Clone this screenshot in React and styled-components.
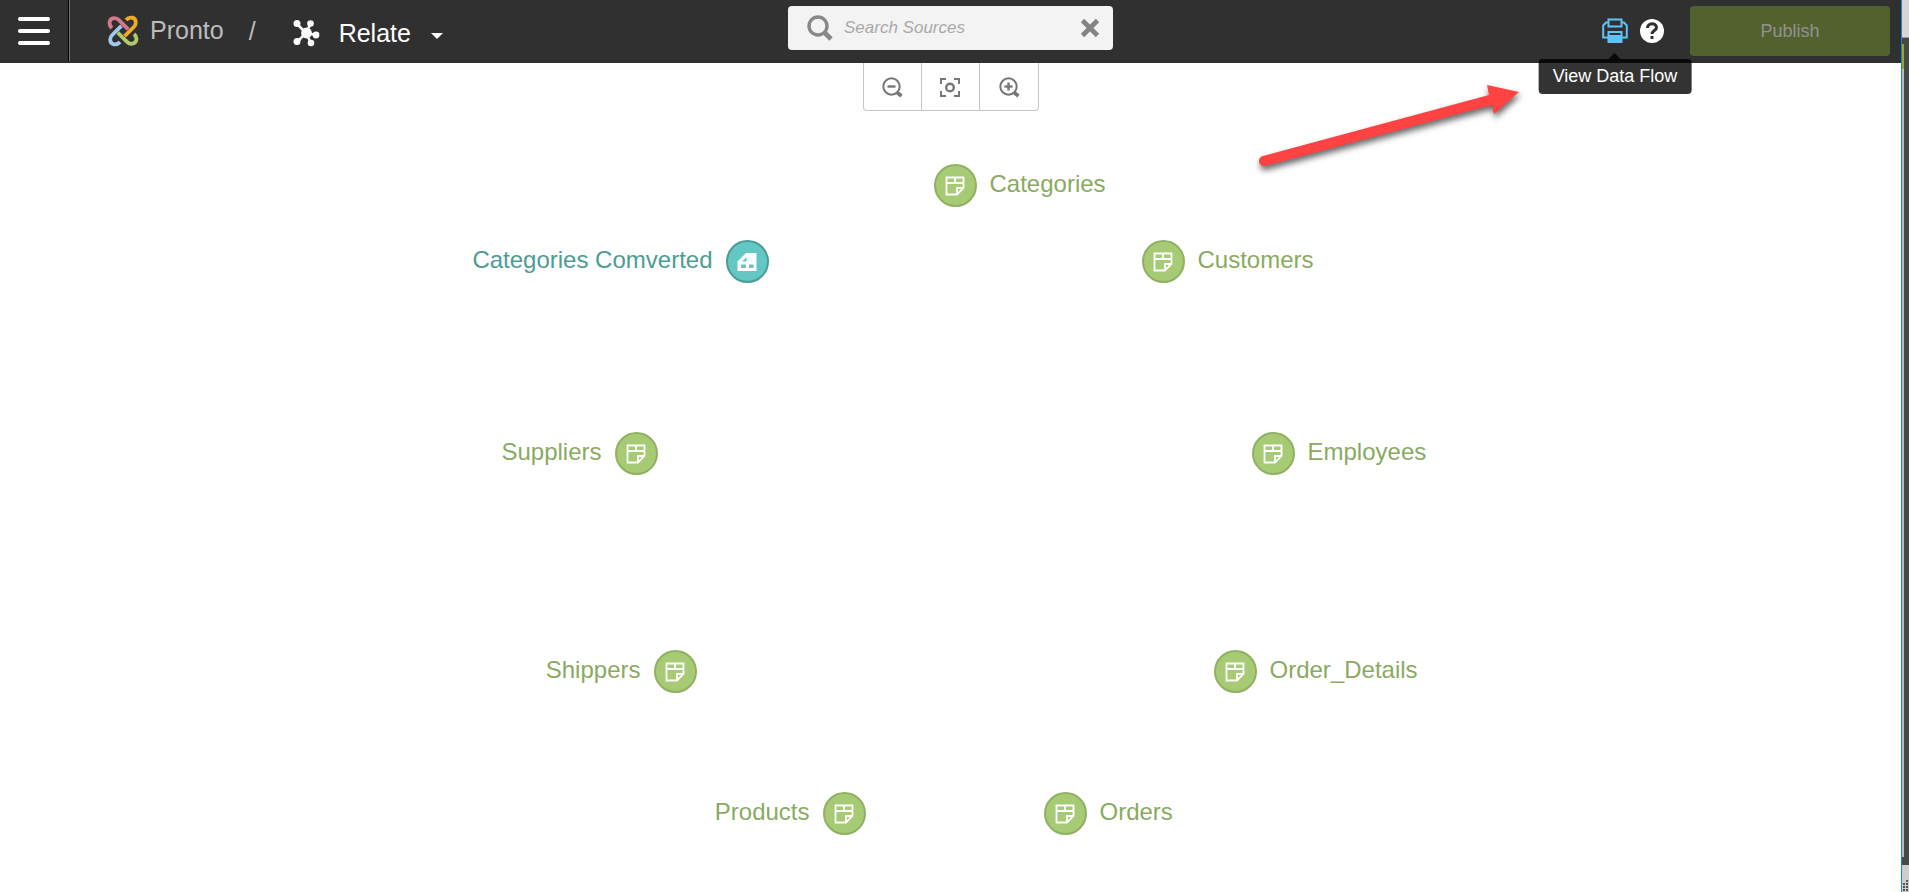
import React, { useState } from "react";
import styled, { createGlobalStyle, css } from "styled-components";

const sources = [
  { name: "Categories", x: 4, y: 185, side: "right" },
  { name: "Customers", x: 212, y: 261, side: "right" },
  { name: "Employees", x: 322, y: 453, side: "right" },
  { name: "Order_Details", x: 284, y: 671, side: "right" },
  { name: "Orders", x: 114, y: 813, side: "right" },
  { name: "Products", x: -106, y: 813, side: "left" },
  { name: "Shippers", x: -275, y: 671, side: "left" },
  { name: "Suppliers", x: -314, y: 453, side: "left" },
  { name: "Categories Comverted", x: -203, y: 261, side: "left", converted: true },
];

const HEADER = 63;

const ribbon = "M5 13C1 9.500 2 3.200 7.500 3.200C9.500 3.200 11 4.200 12 5.200L21.200 14.400";
const ribbonColors = ["#d2798e", "#efab25", "#b2c96b", "#9fc9ea"];

const ProntoLogo = () => (
  <svg width="32" height="32" viewBox="0 0 32 32" fill="none" strokeWidth="3.800">
    {ribbonColors.map((color, i) => (
      <path key={color} d={ribbon} stroke={color} transform={`rotate(${i * 90} 16 16)`} />
    ))}
  </svg>
);

const RelateIcon = () => (
  <svg width="28" height="28" viewBox="0 0 28 28" fill="#fff" stroke="#fff" strokeWidth="2.600">
    <path d="M14 14L5 5M14 14L18.500 5M14 14L24 16M14 14L5 23M14 14L19 24" />
    <g stroke="none">
      <circle cx="14.500" cy="14" r="5.400" />
      <circle cx="5" cy="4.500" r="3.500" />
      <circle cx="18.500" cy="4.500" r="3.300" />
      <circle cx="24" cy="16" r="3.400" />
      <circle cx="5" cy="22.500" r="3.500" />
      <circle cx="19" cy="24" r="3.300" />
    </g>
  </svg>
);

const SearchIcon = () => (
  <svg width="26" height="26" viewBox="0 0 26 26" fill="none" stroke="#888">
    <circle cx="11" cy="11" r="9" strokeWidth="3.400" />
    <path d="M17.500 17.500L24 24" strokeWidth="4.600" />
  </svg>
);

const ClearIcon = () => (
  <svg width="20" height="20" viewBox="0 0 20 20" fill="none" stroke="#838383" strokeWidth="4.600">
    <path d="M2.500 2.500L17.500 17.500M17.500 2.500L2.500 17.500" />
  </svg>
);

const ZoomIcon = ({ plus }) => (
  <svg width="22" height="22" viewBox="0 0 22 22" fill="none" stroke="#777" strokeWidth="2">
    <circle cx="10.500" cy="10.500" r="8.200" />
    <path d="M6.500 10.500H14.500" strokeWidth="2.400" />
    {plus && <path d="M10.500 6.500V14.500" strokeWidth="2.400" />}
    <path d="M16 16.500L20.500 20" strokeWidth="3.600" />
  </svg>
);

const FitIcon = () => (
  <svg width="22" height="22" viewBox="0 0 22 22" fill="none" stroke="#777" strokeWidth="2">
    <path d="M2 8V3H7M15 3H20V8M20 15V20H15M7 20H2V15" />
    <circle cx="11" cy="11.500" r="3.800" strokeWidth="2.400" />
  </svg>
);

const PrinterIcon = () => (
  <svg width="26" height="26" viewBox="0 0 26 26" fill="none" stroke="#5ec3f7" strokeWidth="2">
    <path d="M6.500 8.500V1.500H19.500V8.500Z" />
    <path d="M6.500 4.500H4L1.200 7.500V19.500H6.500M19.500 4.500H22L24.800 7.500V19.500H19.500" />
    <path d="M6.500 14V24H19.500V14Z" />
    <path d="M7 17H19V24H7Z" fill="#5ec3f7" stroke="none" />
  </svg>
);

const HelpIcon = () => (
  <svg width="24" height="24" viewBox="0 0 24 24" fill="none">
    <circle cx="12" cy="12" r="12" fill="#fff" />
    <path d="M7.500 9C7.500 3.500 16.500 3.500 16.500 8.500C16.500 11.500 12 11.500 12 15" stroke="#303030" strokeWidth="3" />
    <path d="M10.500 17H13.500V20H10.500Z" fill="#303030" />
  </svg>
);

const SheetIcon = () => (
  <svg width="20" height="20" viewBox="0 0 20 20" fill="none" stroke="#fff" strokeWidth="1.800">
    <path d="M1.500 1.500H18.500V12L12 18.500H1.500ZM1.500 7H18.500M10 1.500V7M18.500 12H12V18.500" />
  </svg>
);

const ConvertedIcon = () => (
  <svg width="20" height="20" viewBox="0 0 20 20">
    <path
      fill="#fff"
      fillRule="evenodd"
      d="M9 1H19.500V19H.500V9.500ZM9.500 5V9.500H5ZM4 12.500V16H9V12.500ZM12 12.500V16H16.500V12.500Z"
    />
  </svg>
);

const App = () => {
  const [search, setSearch] = useState("");

  return (
    <>
      <GlobalStyle />
      <Page>
        <Window>
          <Header>
            <HeaderStart>
              <MenuButton aria-label="Menu">
                <span />
                <span />
                <span />
              </MenuButton>
              <Breadcrumb>
                <BrandLink href="#pronto">
                  <ProntoLogo />
                  Pronto
                </BrandLink>
                <Slash>/</Slash>
                <PageMenu>
                  <RelateIcon />
                  <PageName>Relate</PageName>
                  <Caret />
                </PageMenu>
              </Breadcrumb>
            </HeaderStart>
            <SearchBox>
              <SearchIcon />
              <input
                type="text"
                aria-label="Search Sources"
                placeholder="Search Sources"
                value={search}
                onChange={(e) => setSearch(e.target.value)}
              />
              <IconButton aria-label="Clear search" onClick={() => setSearch("")}>
                <ClearIcon />
              </IconButton>
            </SearchBox>
            <Actions>
              <TooltipAnchor>
                <IconButton aria-label="View Data Flow">
                  <PrinterIcon />
                </IconButton>
                <Tooltip role="tooltip">View Data Flow</Tooltip>
              </TooltipAnchor>
              <IconButton aria-label="Help">
                <HelpIcon />
              </IconButton>
              <PublishButton disabled>Publish</PublishButton>
            </Actions>
          </Header>
          <Canvas>
            <ZoomBar>
              <button aria-label="Zoom out">
                <ZoomIcon />
              </button>
              <button aria-label="Fit to screen">
                <FitIcon />
              </button>
              <button aria-label="Zoom in">
                <ZoomIcon plus />
              </button>
            </ZoomBar>
            {sources.map((source) => (
              <Node
                key={source.name}
                $side={source.side}
                $x={source.x}
                $y={source.y - HEADER}
                $converted={source.converted}
              >
                <Dot $converted={source.converted}>
                  {source.converted ? <ConvertedIcon /> : <SheetIcon />}
                </Dot>
                <NodeName>{source.name}</NodeName>
              </Node>
            ))}
            <Arrow viewBox="0 0 280 104" width="280" height="104">
              <path
                d="M4 79L230 18L228 8L260 15L235 37L233 28L6 89A5 5 0 0 1 4 79Z"
                fill="#ff4242"
              />
            </Arrow>
          </Canvas>
        </Window>
        <Edge>
          <EdgeTop />
          <EdgeBody>
            <EdgeAccent />
            <EdgeBar />
          </EdgeBody>
          <EdgeBottom>
            <svg width="5" height="11" viewBox="0 0 5 11" fill="#555">
              <path d="M3 0H5V2H3ZM0 3H2V5H0ZM3 3H5V5H3ZM0 6H2V8H0ZM3 6H5V8H3ZM0 9H2V11H0ZM3 9H5V11H3Z" />
            </svg>
          </EdgeBottom>
        </Edge>
      </Page>
    </>
  );
};

export default App;

const GlobalStyle = createGlobalStyle`
  * {
    box-sizing: border-box;
  }

  body {
    margin: 0;
    background: #fff;
    font-family: "Liberation Sans", Arial, sans-serif;
  }

  button,
  input {
    font-family: inherit;
  }
`;

const Page = styled.div`
  display: flex;
  min-height: 100vh;
`;

const Window = styled.div`
  flex: 1;
  min-width: 0;
  display: flex;
  flex-direction: column;
`;

const Header = styled.header`
  display: grid;
  grid-template-columns: 1fr 325px 1fr;
  height: ${HEADER}px;
  background: #303030;
`;

const HeaderStart = styled.div`
  display: flex;
`;

const MenuButton = styled.button`
  display: flex;
  flex-direction: column;
  align-items: flex-end;
  gap: 8px;
  width: 70px;
  height: 61px;
  padding: 17px 19px 0 0;
  border: 0;
  border-right: 1px solid #777;
  box-shadow: inset -1px 0 #000;
  background: none;

  span {
    width: 32px;
    height: 4px;
    border-radius: 2px;
    background: #fff;
  }
`;

const Breadcrumb = styled.nav`
  display: flex;
  align-items: center;
  padding-left: 37px;
  font-size: 25px;
`;

const BrandLink = styled.a`
  display: flex;
  align-items: center;
  gap: 11px;
  height: 60px;
  padding-bottom: 2px;
  color: #bcbcbc;
  text-decoration: none;
`;

const Slash = styled.span`
  margin: 0 36px 0 25px;
  color: #bcbcbc;
`;

const PageMenu = styled.button`
  display: flex;
  align-items: center;
  padding: 3px 0 0;
  border: 0;
  background: none;
  color: #fff;
  font-size: 25px;
`;

const PageName = styled.span`
  margin: 0 20px 0 19px;
`;

const Caret = styled.span`
  margin-top: 5px;
  border: 6px solid transparent;
  border-top-color: #fff;
  border-bottom: 0;
`;

const SearchBox = styled.div`
  display: flex;
  align-items: center;
  height: 44px;
  margin-top: 6px;
  padding: 0 13px 0 19px;
  border-radius: 4px;
  background: #f3f3f3;

  input {
    flex: 1;
    min-width: 0;
    padding: 0 0 0 11px;
    border: 0;
    outline: 0;
    background: none;
    font-size: 17px;
    font-style: italic;
  }

  input::placeholder {
    color: #a9a9a9;
    opacity: 1;
  }
`;

const IconButton = styled.button`
  display: flex;
  padding: 0;
  border: 0;
  background: none;
`;

const Actions = styled.div`
  display: flex;
  align-items: center;
  justify-content: flex-end;
  gap: 12px;
  height: 61px;
  padding-right: 11px;
`;

const TooltipAnchor = styled.div`
  position: relative;
`;

const Tooltip = styled.div`
  position: absolute;
  z-index: 2;
  top: 41px;
  left: 50%;
  padding: 0 14px;
  border-radius: 4px;
  background: rgba(0, 0, 0, 0.8);
  color: #fff;
  font-size: 18px;
  line-height: 35px;
  white-space: nowrap;
  transform: translateX(-50%);

  &::before {
    content: "";
    position: absolute;
    bottom: 100%;
    left: 50%;
    margin-left: -6px;
    border: 6px solid transparent;
    border-top: 0;
    border-bottom-color: rgba(0, 0, 0, 0.8);
  }
`;

const PublishButton = styled.button`
  width: 200px;
  height: 50px;
  margin-left: 14px;
  padding: 2px 0 0;
  border: 0;
  border-radius: 4px;
  background: #53612f;
  color: #929292;
  font-size: 18px;
`;

const Canvas = styled.main`
  position: relative;
  flex: 1;
  min-height: 780px;
  background: #fff;
`;

const ZoomBar = styled.div`
  display: flex;
  width: 176px;
  height: 48px;
  margin: 0 auto;
  border: 1px solid #c6c6c6;
  border-top: 0;
  border-radius: 0 0 4px 4px;

  button {
    flex: 1;
    display: flex;
    align-items: center;
    justify-content: center;
    padding: 0;
    border: 0;
    background: none;
  }

  button + button {
    border-left: 1px solid #c6c6c6;
  }
`;

const Node = styled.div`
  position: absolute;
  top: ${({ $y }) => $y - 21}px;
  display: flex;
  align-items: center;
  gap: 13px;
  color: ${({ $converted }) => ($converted ? "#4b9d94" : "#8aaa5f")};
  font-size: 24px;
  white-space: nowrap;

  ${({ $side, $x }) =>
    $side === "right"
      ? css`
          left: calc(50% + ${$x - 21}px);
        `
      : css`
          right: calc(50% - ${$x + 21}px);
          flex-direction: row-reverse;
        `}
`;

const NodeName = styled.span`
  padding-bottom: 3px;
`;

const Dot = styled.span`
  display: flex;
  align-items: center;
  justify-content: center;
  width: 43px;
  height: 43px;
  border: 2px solid ${({ $converted }) => ($converted ? "#4b9d94" : "#8fb262")};
  border-radius: 50%;
  background: ${({ $converted }) => ($converted ? "#63c7c3" : "#a7ca74")};
`;

const Arrow = styled.svg`
  position: absolute;
  top: 14px;
  left: calc(50% + 308px);
  filter: drop-shadow(1px 4px 3px rgba(0, 0, 0, 0.6));
`;

const Edge = styled.div`
  display: flex;
  flex-direction: column;
  width: 8px;
  border-left: 1px solid #2280c4;
  background: #464848;
`;

const EdgeTop = styled.div`
  height: 38px;
  background: #d6d6d6;
  border-bottom: 1px solid #999;
`;

const EdgeBody = styled.div`
  flex: 1;
  display: flex;
  flex-direction: column;
  padding-top: 6px;
`;

const EdgeAccent = styled.div`
  width: 2px;
  height: 25px;
  background: #93a823;
`;

const EdgeBar = styled.div`
  flex: 1;
  width: 2px;
  margin-bottom: 8px;
  background: #bdbdbd;
`;

const EdgeBottom = styled.div`
  display: flex;
  align-items: flex-end;
  height: 27px;
  padding: 0 0 1px 1px;
  background: #cdcdcd;
`;
